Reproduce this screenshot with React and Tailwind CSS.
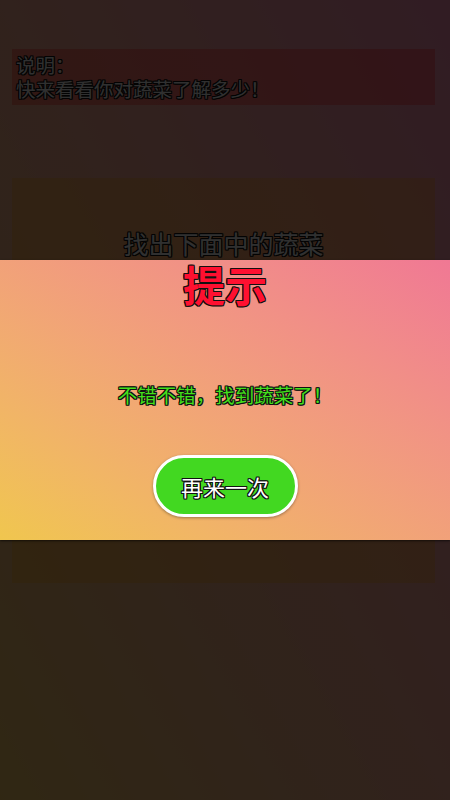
import React from 'react';

const cjk = { fontFamily: '"Noto Sans CJK SC", "Noto Sans", sans-serif' };

const outlineDark = '[text-shadow:1px_0_0_#111,-1px_0_0_#111,0_1px_0_#111,0_-1px_0_#111,1px_1px_0_#111,-1px_-1px_0_#111,1px_-1px_0_#111,-1px_1px_0_#111]';

const HintModal = ({ onRetry }) => (
    <div className="absolute inset-0 flex items-center bg-black/80">
        <div className="flex h-[280px] w-full flex-col items-center bg-linear-to-tr from-[#f0c64e] to-[#f07894] shadow-[0_1px_2px_rgba(0,0,0,0.6)]">
            <h2 className={`text-[42px] font-bold leading-[48px] text-[#ff1030] ${outlineDark}`}>
                提示
            </h2>
            <p className={`mt-[74px] text-[19.5px] leading-[26px] text-[#44e01c] ${outlineDark}`}>
                不错不错，找到蔬菜了！
            </p>
            <button
                onClick={onRetry}
                className="mt-[47px] flex h-[62px] w-[145px] items-center justify-center rounded-full border-[3px] border-white bg-[#42d821] shadow-[0_1px_3px_rgba(0,0,0,0.35)]"
            >
                <span className={`text-[22px] leading-[28px] text-white ${outlineDark}`}>再来一次</span>
            </button>
        </div>
    </div>
);

const App = () => {
    return (
        <div
            className="relative h-[800px] w-[450px] overflow-hidden bg-linear-to-tr from-[#efc262] to-[#f48cb0]"
            style={cjk}
        >
            <div className="px-[12px] pt-[49px]">
                <div className={`w-[423px] bg-[#ff0000]/30 px-[4px] py-[4px] text-[19.5px] leading-[24px] text-[#f0f0f0] ${outlineDark}`}>
                    <div>说明：</div>
                    <div>快来看看你对蔬菜了解多少！</div>
                </div>

                <div className="mt-[73px] h-[405px] w-[423px] bg-[#ffa000]/30 pt-[49px]">
                    <h1 className={`text-center text-[25px] leading-[32px] text-[#f0f0f0] ${outlineDark}`}>
                        找出下面中的蔬菜
                    </h1>
                </div>
            </div>

            <HintModal onRetry={() => {}} />
        </div>
    );
};

export default App;
